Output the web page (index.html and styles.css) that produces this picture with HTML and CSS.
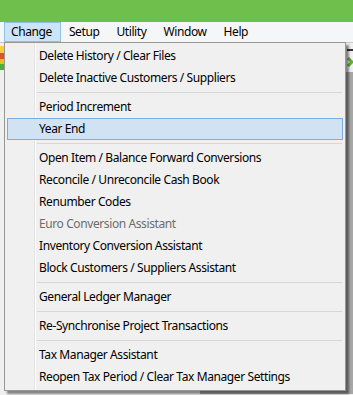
FILE: index.html
```html
<!DOCTYPE html>
<html lang="en">
<head>
  <meta charset="UTF-8">
  <title>Change menu</title>
  <link rel="stylesheet" href="styles.css">
</head>
<body>
  <div class="titlebar"></div>

  <nav class="menubar">
    <span class="menu-title active">Change</span>
    <span class="menu-title">Setup</span>
    <span class="menu-title">Utility</span>
    <span class="menu-title">Window</span>
    <span class="menu-title">Help</span>
  </nav>

  <div class="workspace">
    <div class="toolbar">
      <span class="tool tool-chart"></span>
      <span class="tool tool-go">
        <svg width="14" height="22" viewBox="0 0 14 22"><path d="M1 3h12v2H1z" fill="#333"/><path d="M2 12l4 4-4 4" fill="none" stroke="#5cb130" stroke-width="3"/></svg>
      </span>
    </div>
    <div class="client">
      <div class="side"></div>
      <div class="mdi"></div>
    </div>

    <ul class="dropdown">
      <li class="item">Delete History / Clear Files</li>
      <li class="item">Delete Inactive Customers / Suppliers</li>
      <li class="sep"></li>
      <li class="item">Period Increment</li>
      <li class="item hover">Year End</li>
      <li class="sep"></li>
      <li class="item">Open Item / Balance Forward Conversions</li>
      <li class="item">Reconcile / Unreconcile Cash Book</li>
      <li class="item">Renumber Codes</li>
      <li class="item disabled">Euro Conversion Assistant</li>
      <li class="item">Inventory Conversion Assistant</li>
      <li class="item">Block Customers / Suppliers Assistant</li>
      <li class="sep"></li>
      <li class="item">General Ledger Manager</li>
      <li class="sep"></li>
      <li class="item">Re-Synchronise Project Transactions</li>
      <li class="sep"></li>
      <li class="item">Tax Manager Assistant</li>
      <li class="item">Reopen Tax Period / Clear Tax Manager Settings</li>
    </ul>
  </div>
</body>
</html>
```

FILE: styles.css
```css
* {
  margin: 0;
  padding: 0;
  box-sizing: border-box;
}

body {
  width: 353px;
  height: 395px;
  overflow: hidden;
  font-family: "Noto Sans", sans-serif;
  font-size: 12px;
  letter-spacing: -0.4px;
  color: #000;
  background: #f0f0f0;
}

.titlebar {
  height: 22px;
  background: #6fbf4c;
}

.menubar {
  display: flex;
  height: 20px;
  padding-left: 4px;
  background: #f5f6f7;
}

.menu-title {
  padding: 0 8px 0 6px;
  line-height: 18px;
  border: 1px solid transparent;
}

.menu-title + .menu-title {
  margin-left: 1px;
}

.menu-title.active {
  background: #cce4f7;
  border-color: #8fc0ea;
}

.workspace {
  position: relative;
  height: 353px;
}

.toolbar {
  display: flex;
  justify-content: space-between;
  height: 30px;
  padding-top: 3px;
  background: #f0f0f0;
  border-top: 1px solid #c8c8c8;
}

.tool {
  display: block;
  width: 16px;
  height: 24px;
}

.tool-chart {
  margin-left: -12px;
  background: linear-gradient(#f3d13a 0 30%, #e0502e 30% 55%, #e8c21c 55% 75%, #4fae3a 75%);
}

.tool-go {
  width: 7px;
  overflow: hidden;
}

.client {
  display: flex;
  height: 322px;
}

.side {
  width: 200px;
  background: #f0f0f0;
}

.mdi {
  flex: 1;
  background: #a7a7a7;
}

.dropdown {
  position: absolute;
  top: 0;
  left: 4px;
  width: 342px;
  padding: 2px;
  list-style: none;
  background: #f0f0f0 linear-gradient(90deg, transparent 29px, #e2e3e3 29px 30px, #fff 30px 31px, transparent 31px);
  border: 1px solid #979797;
  box-shadow: 3px 3px 2px rgba(0, 0, 0, 0.45);
}

.item {
  height: 22px;
  line-height: 20px;
  padding-left: 31px;
  border: 1px solid transparent;
  white-space: nowrap;
}

.item.hover {
  background: #d1e2f2;
  border-color: #78aee5;
}

.item.disabled {
  color: #6d6d6d;
}

.sep {
  height: 7px;
  margin-left: 30px;
  margin-right: 1px;
  padding-top: 3px;
}

.sep::before {
  content: "";
  display: block;
  height: 1px;
  background: #d7d7d7;
}
```
